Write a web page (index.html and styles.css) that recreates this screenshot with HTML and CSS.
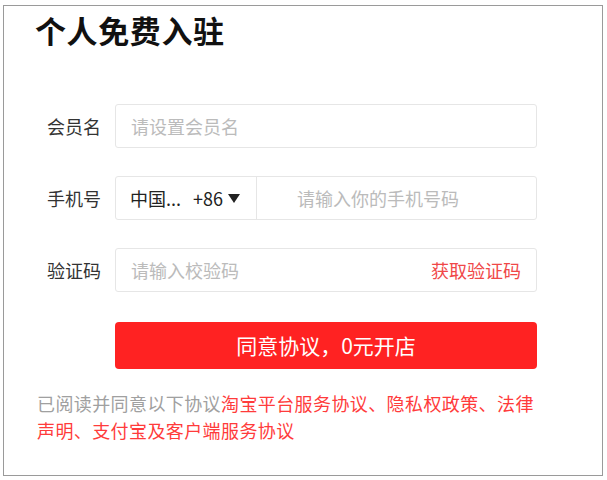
FILE: index.html
```html
<!DOCTYPE html>
<html lang="zh-CN">
<head>
    <meta charset="UTF-8">
    <meta name="viewport" content="width=device-width, initial-scale=1.0">
    <title>个人免费入驻</title>
    <link rel="stylesheet" href="styles.css">
</head>
<body>
<div class="frame">
    <h2 class="title">个人免费入驻</h2>
    <div class="form">
        <div class="row">
            <span class="label">会员名</span>
            <div class="field">
                <span class="placeholder">请设置会员名</span>
            </div>
        </div>
        <div class="row">
            <span class="label">手机号</span>
            <div class="field phone">
                <div class="country">
                    <span class="country-name">中国...</span>
                    <span class="country-code">+86</span>
                    <span class="caret"></span>
                </div>
                <span class="placeholder phone-placeholder">请输入你的手机号码</span>
            </div>
        </div>
        <div class="row">
            <span class="label">验证码</span>
            <div class="field code">
                <span class="placeholder">请输入校验码</span>
                <a href="#" class="get-code">获取验证码</a>
            </div>
        </div>
        <div class="row button-row">
            <a href="#" class="submit">同意协议，0元开店</a>
        </div>
    </div>
    <div class="agreement">
        <div class="line">已阅读并同意以下协议<a href="#">淘宝平台服务协议</a><span class="sep">、</span><a href="#">隐私权政策</a><span class="sep">、</span><a href="#">法律</a></div>
        <div class="line"><a href="#">声明</a><span class="sep">、</span><a href="#">支付宝及客户端服务协议</a></div>
    </div>
</div>
</body>
</html>
```

FILE: styles.css
```css
* {
    box-sizing: border-box;
}
body {
    margin: 0;
    font-family: "Noto Sans CJK SC", "Liberation Sans", sans-serif;
    background-color: #ffffff;
    color: #333333;
}
.frame {
    width: 600px;
    height: 471px;
    margin: 5px 0 0 3px;
    border: 1px solid #9a9a9a;
}
.title {
    margin: 0;
    padding: 5px 0 0 31px;
    font-size: 31px;
    line-height: 38px;
    letter-spacing: 0.6px;
    font-weight: bold;
    color: #111111;
}
.form {
    padding: 55px 0 0 42px;
}
.row {
    display: flex;
    align-items: center;
    gap: 14px;
    margin-bottom: 28px;
}
.label {
    width: 55px;
    font-size: 18px;
    color: #333333;
    text-align: right;
}
.field {
    display: flex;
    align-items: center;
    width: 422px;
    height: 44px;
    padding: 0 15px;
    border: 1px solid #e6e6e6;
    border-radius: 3px;
    font-size: 18px;
}
.placeholder {
    color: #bbbbbb;
}
.phone {
    padding: 0;
}
.country {
    display: flex;
    align-items: center;
    width: 141px;
    height: 100%;
    padding-left: 14px;
    border-right: 1px solid #e6e6e6;
    color: #222222;
}
.country-name {
    width: 63px;
}
.caret {
    width: 0;
    height: 0;
    margin-left: 5px;
    border-left: 6px solid transparent;
    border-right: 6px solid transparent;
    border-top: 9px solid #222222;
}
.phone-placeholder {
    padding-left: 40px;
}
.code {
    justify-content: space-between;
}
.get-code {
    color: #f04848;
    text-decoration: none;
}
.button-row {
    padding-left: 69px;
    margin-top: 30px;
}
.submit {
    display: block;
    width: 422px;
    height: 47px;
    line-height: 47px;
    background-color: #ff2222;
    border-radius: 4px;
    color: #ffffff;
    font-size: 21px;
    text-align: center;
    text-decoration: none;
}
.agreement {
    margin: -7px 0 0 33px;
    font-size: 18px;
    line-height: 27px;
    letter-spacing: 0.4px;
    color: #a0a0a0;
}
.agreement a {
    color: #ff3b3b;
    text-decoration: none;
}
.sep {
    color: #ff3b3b;
}
```
